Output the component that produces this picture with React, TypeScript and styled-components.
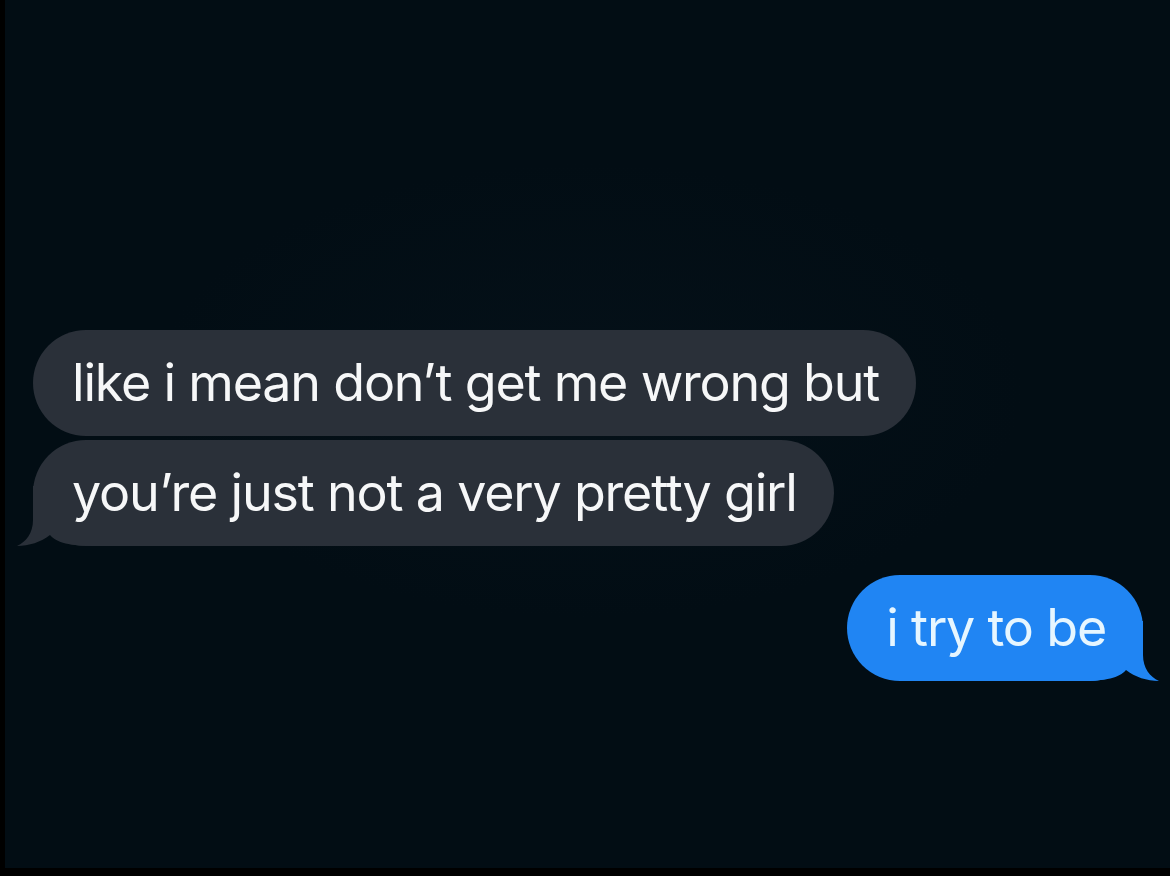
import React from "react";
import styled, { createGlobalStyle } from "styled-components";

const Global = createGlobalStyle`
  html, body { margin: 0; padding: 0; background: #000; }
  body { width: 1170px; height: 876px; overflow: hidden; }
`;

const Frame = styled.div`
  width: 1170px;
  height: 876px;
  background: #000;
  display: flex;
  flex-direction: column;
`;

const Screen = styled.main`
  height: 868px;
  margin-left: 5px;
  background:
    radial-gradient(ellipse 50% 35% at 50% 45%, rgba(10, 24, 34, 0.35), transparent 75%),
    #020d14;
  display: flex;
  flex-direction: column;
  padding: 330px 10px 0 28px;
  box-sizing: border-box;
  font-family: Inter, "Liberation Sans", sans-serif;
`;

const Group = styled.div<{ $align: "start" | "end"; $mt?: number }>`
  display: flex;
  flex-direction: column;
  align-items: ${(p) => (p.$align === "start" ? "flex-start" : "flex-end")};
  gap: 4px;
  margin-top: ${(p) => p.$mt ?? 0}px;
  padding-right: ${(p) => (p.$align === "end" ? 17 : 0)}px;
`;

const Bubble = styled.div<{ $out?: boolean }>`
  position: relative;
  isolation: isolate;
  height: 106px;
  box-sizing: border-box;
  padding: 22px 37px 22px 39px;
  border-radius: 53px;
  background: ${(p) => (p.$out ? "#2085f3" : "#2a3039")};
  color: ${(p) => (p.$out ? "#e6f6ff" : "#f6f7f8")};
  font-size: 52px;
  line-height: 62px;
  letter-spacing: -1.2px;
  font-variant-ligatures: none;
  white-space: nowrap;
`;

const Tail = styled.svg<{ $side: "left" | "right" }>`
  position: absolute;
  z-index: -1;
  bottom: 0;
  width: 80px;
  height: 60px;
  ${(p) => (p.$side === "left" ? "left: -16px;" : "right: -16px; transform: scaleX(-1);")}
`;

const TailShape = ({ side, color }: { side: "left" | "right"; color: string }) => (
  <Tail $side={side} viewBox="0 0 80 60">
    <path
      d="M16 0 L16 34 C16 47 9 56 0 60 C12 60 24 56 33 49 C40 57 52 60 80 60 L80 0 Z"
      fill={color}
    />
  </Tail>
);

export default function App() {
  return (
    <Frame>
      <Global />
      <Screen>
        <Group $align="start">
          <Bubble>like i mean don’t get me wrong but</Bubble>
          <Bubble>
            you’re just not a very pretty girl
            <TailShape side="left" color="#2a3039" />
          </Bubble>
        </Group>
        <Group $align="end" $mt={29}>
          <Bubble $out>
            i try to be
            <TailShape side="right" color="#2085f3" />
          </Bubble>
        </Group>
      </Screen>
    </Frame>
  );
}
